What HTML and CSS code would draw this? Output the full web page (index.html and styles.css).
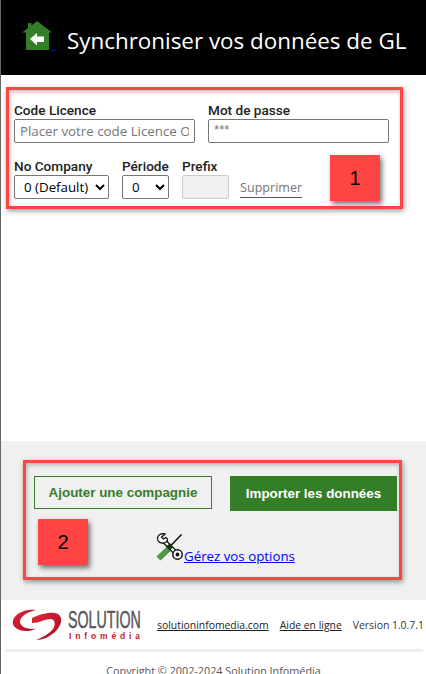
FILE: index.html
```html
<!DOCTYPE html>
<html lang="fr">
<head>
<meta charset="utf-8">
<title>Synchroniser vos données de GL</title>
<link rel="stylesheet" href="styles.css">
</head>
<body>
<div class="page">
  <header class="top">
    <a class="home" href="#">
      <svg class="home-icon" width="30" height="30" viewBox="0 0 30 30" aria-hidden="true">
        <path fill="#357e28" d="M0 11.500 L6 7 V2 H9.500 V4.500 L15 0 L30 11.500 H27 V29 H4 V11.500 Z"/>
        <path fill="#fff" d="M8 18 L15 12 V15.500 H22 V21 H15 V24.500 Z"/>
      </svg><span class="home-dot"></span>
    </a>
    <h1 class="title">Synchroniser vos données de GL</h1>
  </header>

  <section class="form">
    <div class="row row-one">
      <label class="field field-wide"><span class="lbl">Code Licence</span>
        <input class="inp" type="text" placeholder="Placer votre code Licence Origine"></label>
      <label class="field field-wide"><span class="lbl">Mot de passe</span>
        <input class="inp inp-pass" type="text" placeholder="***"></label>
    </div>
    <div class="row row-two">
      <label class="field"><span class="lbl">No Company</span>
        <select class="sel sel-co"><option>0 (Default)</option></select></label>
      <label class="field"><span class="lbl">Période</span>
        <select class="sel sel-per"><option>0</option></select></label>
      <label class="field"><span class="lbl">Prefix</span>
        <input class="inp inp-prefix" type="text" disabled></label>
      <a class="del" href="#">Supprimer</a>
    </div>
  </section>

  <section class="band">
    <div class="actions">
      <button class="btn btn-line" type="button">Ajouter une compagnie</button>
      <button class="btn btn-solid" type="button">Importer les données</button>
    </div>
    <div class="opts">
      <svg class="tools" width="28" height="28" viewBox="0 0 28 28" aria-hidden="true">
        <path d="M25.500 1.500 L13 14.500" stroke="#111" stroke-width="1.500" fill="none"/>
        <path d="M8 8 L19 19" stroke="#111" stroke-width="5" fill="none"/>
        <path d="M7 7 L19 19" stroke="#fff" stroke-width="2.400" fill="none"/>
        <path fill="#fff" stroke="#111" stroke-width="1.300" d="M9 1 C5 0 1.500 2 1.500 5.500 C1.500 9 5 11 9.500 9.500 L11.500 7.500 C11.500 6 11 5 10 4.500 L7.500 6 L5.500 4 L8 2 Z"/>
        <path fill="#4c9a43" stroke="#2c6e26" stroke-width=".7" d="M1 23.500 L10.500 14.500 L14 18 L4.500 27 Z"/>
        <path fill="#0b3a08" d="M10 13.500 L13.500 10.500 L17 14.500 L13.500 17.500 Z"/>
        <circle cx="21.500" cy="21.500" r="4.700" fill="#fff" stroke="#111" stroke-width="1.500"/>
        <circle cx="21.500" cy="21.500" r="1.900" fill="#111"/>
      </svg>
      <a class="opts-link" href="#">Gérez vos options</a>
    </div>
  </section>

  <footer class="foot">
    <div class="foot-row">
      <svg class="logo" width="130" height="36" viewBox="0 0 130 36">
        <defs>
          <linearGradient id="lg" x1="0" y1="0" x2="1" y2="1">
            <stop offset="0" stop-color="#e0273a"/><stop offset="1" stop-color="#a80f1e"/>
          </linearGradient>
        </defs>
        <path fill="url(#lg)" d="M24 3 C12 1 1 8 .7 15 C.5 23 14 27 24 21.500 C16 23 8 20 8 14.500 C8 10 15 5 24 3 Z"/>
        <path fill="url(#lg)" d="M20 11 C28 7 40 4 46 7 C52 11 49 19 43 25 C37 30 31 33 24 33 C31 30 37 27 41 22 C44 17 43 12 38 12 C33 12 27 16 20 16 Z"/>
        <g transform="translate(56 21) scale(.62 1)"><text class="logo-main">SOLUTION</text></g>
        <text class="logo-sub" x="57" y="31.500" textLength="71" lengthAdjust="spacing">Infomédia</text>
      </svg>
      <a class="foot-link foot-site" href="#">solutioninfomedia.com</a>
      <a class="foot-link" href="#">Aide en ligne</a>
      <span class="version">Version 1.0.7.1</span>
    </div>
    <div class="foot-rule"></div>
    <p class="copy">Copyright © 2002-2024 Solution Infomédia</p>
  </footer>

  <div class="frame frame-one"></div>
  <div class="frame frame-two"></div>
  <div class="badge badge-one">1</div>
  <div class="badge badge-two">2</div>
</div>
</body>
</html>
```

FILE: styles.css
```css
* { box-sizing: border-box; }
html, body { margin: 0; padding: 0; background: #fff; }
body { overflow: hidden; }
.page {
  position: relative;
  width: 426px;
  height: 674px;
  overflow: hidden;
  border-left: 1px solid #666;
  display: flex;
  flex-direction: column;
  font-family: "Open Sans", sans-serif;
}
.top {
  height: 75px;
  flex: none;
  background: #000;
  display: flex;
  align-items: flex-start;
  padding: 20px 0 0 21px;
}
.home { display: flex; align-items: flex-end; height: 31px; }
.home-icon { display: block; }
.home-dot { width: 4px; height: 1px; background: #00f; margin-left: 0; }
.title {
  margin: 6px 0 0 11px;
  color: #fff;
  font-size: 22.400px;
  line-height: 29px;
  font-weight: 400;
  white-space: nowrap;
}
.form {
  flex: none;
  height: 366px;
  padding: 27px 0 0 13px;
}
.row { display: flex; }
.row-one { gap: 13px; }
.row-two { margin-top: 15px; gap: 13px; align-items: flex-end; }
.field { display: flex; flex-direction: column; }
.lbl {
  font-family: Roboto, sans-serif;
  font-weight: 500;
  font-size: 13.600px;
  line-height: 17px;
  color: #222;
  white-space: nowrap;
}
.inp {
  width: 181px;
  height: 24px;
  border: 1px solid #767676;
  border-radius: 2px;
  padding: 0 5px;
  font-family: "Open Sans", sans-serif;
  font-size: 13.300px;
  background: #fff;
}
.inp::placeholder { color: #767676; opacity: 1; }
.inp-pass { padding-bottom: 3px; font-family: "Liberation Sans", sans-serif; }
.inp-prefix {
  width: 47px;
  border-color: #ccc;
  background: #f0f0f0;
}
.sel {
  height: 24px;
  border: 1px solid #767676;
  border-radius: 2px;
  background: #fff;
  font-family: "Open Sans", sans-serif;
  font-size: 13.300px;
  color: #000;
}
.sel-co { width: 95px; padding-left: 5px; }
.sel-per { width: 47px; padding-left: 5px; }
.del {
  margin-left: -2px;
  margin-bottom: 1px;
  color: #767676;
  font-size: 12.600px;
  line-height: 18px;
  text-decoration: none;
  border-bottom: 1px solid #555;
}
.band {
  flex: none;
  height: 159px;
  background: #f0f0f0;
  padding: 35px 0 0 33px;
}
.actions { display: flex; gap: 18px; align-items: flex-start; }
.btn {
  font-family: "Liberation Sans", sans-serif;
  font-weight: 700;
  font-size: 13.400px;
  padding: 0;
  border-radius: 0;
}
.btn-line {
  width: 178px;
  height: 33px;
  background: transparent;
  color: #357e28;
  border: 1px solid #357e28;
}
.btn-solid {
  width: 167px;
  height: 35px;
  background: #357e28;
  color: #fff;
  border: 0;
}
.opts {
  display: flex;
  align-items: flex-end;
  margin: 22px 0 0 122px;
}
.tools { display: block; flex: none; }
.opts-link {
  color: #00f;
  font-size: 13.300px;
  line-height: 18px;
  margin-bottom: -4px;
  white-space: nowrap;
}
.foot { flex: none; background: #fff; }
.foot-row {
  height: 49px;
  display: flex;
  align-items: flex-start;
  padding: 7px 0 0 11px;
  white-space: nowrap;
}
.logo { display: block; flex: none; }
.logo-main {
  font-family: "Liberation Sans", sans-serif;
  font-size: 23px;
  fill: #58585a;
  stroke: #58585a;
  stroke-width: .5px;
}
.logo-sub {
  font-family: "Liberation Sans", sans-serif;
  font-size: 8.500px;
  font-weight: 700;
  fill: #c8202f;
}
.foot-link {
  color: #222;
  font-size: 10.400px;
  line-height: 16px;
  margin-top: 10px;
}
.foot-site { margin-left: 15px; }
.foot-link + .foot-link { margin-left: 11px; }
.version {
  color: #333;
  font-size: 10.400px;
  line-height: 16px;
  margin-top: 10px;
  margin-left: 11px;
}
.foot-rule { height: 3px; margin: 0 3px 0 5px; background: #eee; }
.copy {
  margin: 11px 0 0;
  text-align: center;
  color: #555;
  font-size: 10.800px;
  line-height: 16px;
}
.frame {
  position: absolute;
  border: 3px solid #ff4444;
  box-shadow: 1px 2px 5px rgba(0, 0, 0, .4), inset 1px 2px 4px rgba(0, 0, 0, .25);
  pointer-events: none;
}
.frame-one { left: 5px; top: 87px; width: 397px; height: 122px; }
.frame-two { left: 22px; top: 460px; width: 379px; height: 120px; }
.badge {
  position: absolute;
  width: 50px;
  height: 46px;
  background: #ff4444;
  box-shadow: 2px 3px 5px rgba(0, 0, 0, .55);
  display: flex;
  align-items: center;
  justify-content: center;
  font-family: "Liberation Sans", sans-serif;
  font-size: 20px;
  color: #000;
}
.badge-one { left: 329px; top: 155px; }
.badge-two { left: 37px; top: 519px; }
```
